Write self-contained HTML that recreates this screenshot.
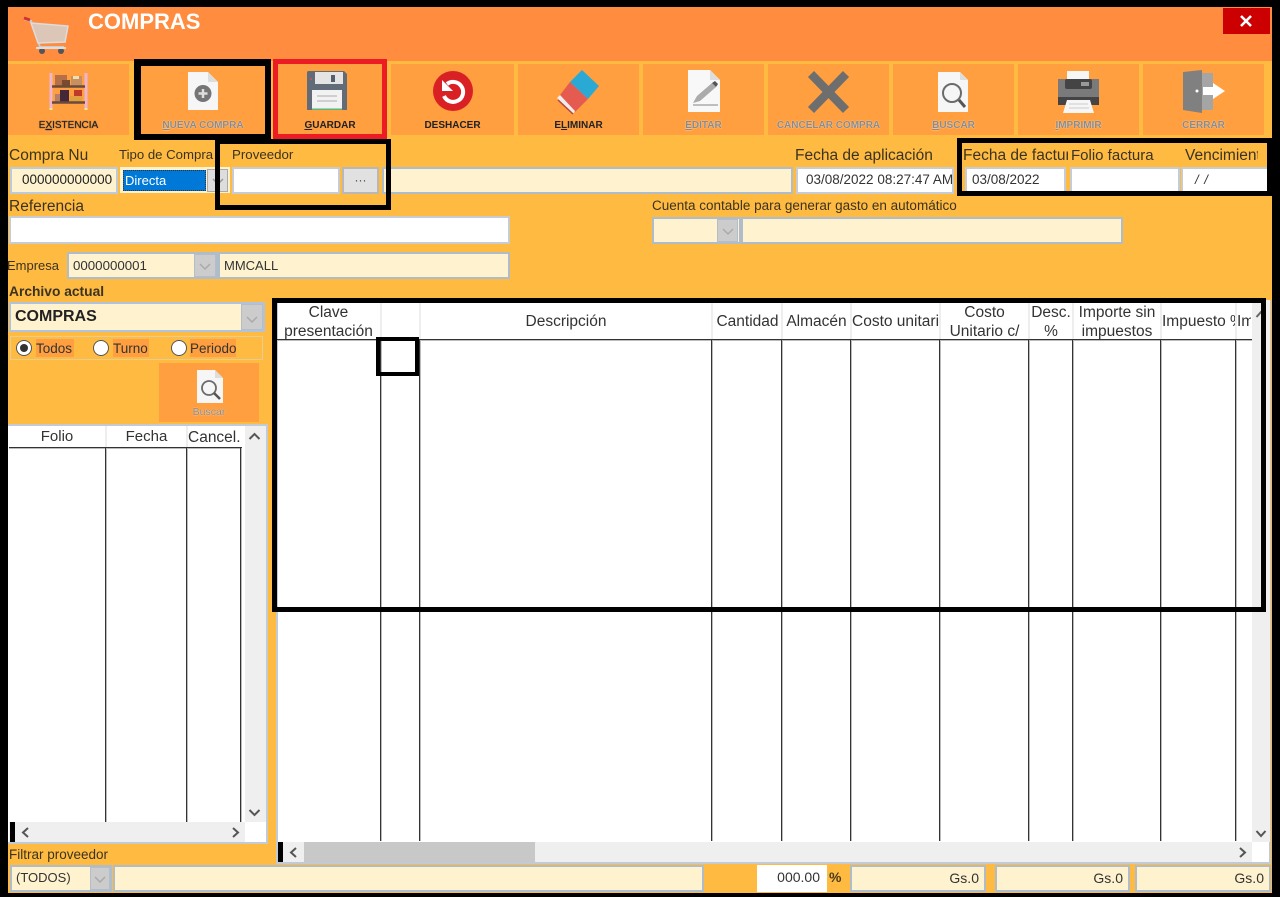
<!DOCTYPE html>
<html><head><meta charset="utf-8"><style>
html,body{margin:0;padding:0;background:#000}
body{width:1280px;height:897px;position:relative;overflow:hidden;font-family:"Liberation Sans",sans-serif;color:#222;font-size:14px}
div{position:absolute;box-sizing:border-box}
svg{position:absolute;overflow:visible}
.t{white-space:nowrap;line-height:16px;color:#3a3320}
.btn{background:#FF9F3F;top:64px;height:71px}
.lb{position:absolute;left:0;right:0;top:56px;text-align:center;font:bold 10px/12px "Liberation Sans",sans-serif;color:#222;white-space:nowrap}
.g{color:#8a8a8a;text-shadow:0 0 1px #fff}
.f{background:#FFF2CF;border:2px solid #AFBDCB;line-height:22px;white-space:nowrap;overflow:hidden;color:#333}
.w{background:#fff;border:2px solid #C6CCD2;line-height:22px;white-space:nowrap;overflow:hidden;color:#333}
.dd{background:#CCCCCC;border:1px solid #B5BEC8}
.bk{border:5px solid #000}
.vl{width:1px;background:#333;box-shadow:1px 0 0 #bbb;top:340px;height:501px}
.vh{width:2px;background:#EEE;top:302px;height:37px}
.vs{width:1px;background:#333;box-shadow:1px 0 0 #bbb;top:448px;height:374px}
.h{font-size:15.5px;line-height:19px;text-align:center;color:#333;white-space:nowrap;overflow:hidden}
</style></head><body>
<div style="left:8px;top:7px;width:1264px;height:886px;background:#FFBA42"></div>
<div style="left:8px;top:7px;width:1264px;height:54px;background:#FF8C3F"></div>
<div style="left:8px;top:61px;width:1264px;height:3px;background:#FFBA42"></div>
<div style="left:88px;top:9px;font:bold 22px/26px 'Liberation Sans',sans-serif;color:#fff;white-space:nowrap">COMPRAS</div>
<div style="left:1223px;top:8px;width:47px;height:26px;background:#CC0000"></div>
<svg style="left:1239px;top:15px" width="14" height="12"><path d="M2 1L12 11M12 1L2 11" stroke="#fff" stroke-width="2.600"/></svg>
<!-- cart -->
<svg style="left:22px;top:15px" width="50" height="42"><path d="M2 4L9 6L18 32H42" fill="none" stroke="#ccc" stroke-width="2"/><path d="M2 3l6 2" stroke="#c33" stroke-width="3"/><path d="M9 8L46 11L43 27L16 28Z" fill="#DCC6B8" stroke="#ddd" stroke-width="1.500"/><circle cx="20" cy="36" r="3" fill="#555"/><circle cx="39" cy="36" r="3" fill="#555"/><path d="M14 33H44" stroke="#ddd" stroke-width="2"/></svg>

<!-- toolbar -->
<div class="btn" style="left:8px;width:121px"><div class="lb" style="font-weight:normal;text-shadow:0 0 1px #333">E<u>X</u>ISTENCIA</div></div>
<div class="btn" style="left:141px;width:124px"><div class="lb g"><u>N</u>UEVA COMPRA</div></div>
<div class="btn" style="left:278px;width:104px"><div class="lb"><u>G</u>UARDAR</div></div>
<div class="btn" style="left:391px;width:123px"><div class="lb">DESHACER</div></div>
<div class="btn" style="left:518px;width:121px"><div class="lb">E<u>L</u>IMINAR</div></div>
<div class="btn" style="left:643px;width:121px"><div class="lb g"><u>E</u>DITAR</div></div>
<div class="btn" style="left:768px;width:121px"><div class="lb g">CANCELAR COMPRA</div></div>
<div class="btn" style="left:893px;width:121px"><div class="lb g"><u>B</u>USCAR</div></div>
<div class="btn" style="left:1018px;width:121px"><div class="lb g"><u>I</u>MPRIMIR</div></div>
<div class="btn" style="left:1143px;width:121px"><div class="lb g">CERRAR</div></div>

<!-- shelf -->
<svg style="left:49px;top:72px" width="40" height="40"><path d="M2 1V38M37 1V38" stroke="#EFB5D0" stroke-width="3"/><rect x="6" y="3" width="12" height="11" fill="#B5704A"/><rect x="13" y="8" width="8" height="6" fill="#7A4A2E"/><rect x="22" y="4" width="11" height="10" fill="#C89060"/><rect x="24" y="4" width="6" height="3" fill="#F0DDB0"/><rect x="6" y="22" width="5" height="8" fill="#B5806A"/><rect x="11" y="18" width="9" height="12" fill="#43283A"/><rect x="21" y="24" width="12" height="6" fill="#E0A040"/><rect x="25" y="18" width="8" height="6" fill="#C03A2A"/><path d="M3 14.500H36M3 30.500H36" stroke="#6A4A3A" stroke-width="2.500"/><path d="M2 36v2M37 36v2" stroke="#EEE8A0" stroke-width="3"/></svg>
<!-- doc plus -->
<svg style="left:187px;top:71px" width="32" height="40"><path d="M1 1H21L31 11V39H1Z" fill="#F6F6F6"/><path d="M21 1L31 11H21Z" fill="#DDD"/><circle cx="16" cy="22.500" r="8.500" fill="#757575"/><path d="M16 18V27M11.500 22.500H20.500" stroke="#ddd" stroke-width="2.500"/></svg>
<!-- floppy -->
<svg style="left:306px;top:71px" width="42" height="40"><path d="M2 0H38L41 3V39H1V1Z" fill="#626B78"/><rect x="9" y="1" width="28" height="12" fill="#E4E4E4"/><rect x="25" y="4" width="4" height="7" fill="#555E6B"/><rect x="6" y="19" width="30" height="20" fill="#F2F2F2"/><path d="M11 25H31M11 30H31" stroke="#CFCFCF" stroke-width="2"/><rect x="6" y="37.500" width="30" height="1.500" fill="#5DB77A"/><circle cx="5" cy="8" r="1" fill="#c55"/></svg>
<!-- undo -->
<svg style="left:432px;top:71px" width="42" height="42"><circle cx="21" cy="20" r="20" fill="#D92025"/><path d="M15 13A10 10 0 1 1 12 25" fill="none" stroke="#fff" stroke-width="4"/><path d="M10 9V20H21Z" fill="#fff"/></svg>
<!-- eraser -->
<svg style="left:556px;top:69px" width="46" height="46"><path d="M14 13L32 30L19 43L4 26Z" fill="#E55B50"/><path d="M14 13L26 1L43 17L32 30Z" fill="#2AA9D5"/><path d="M4 26L19 42L17 45L1 29Z" fill="#EDEDED"/><path d="M2 31L17 45" stroke="#B8433A" stroke-width="1.500"/></svg>
<!-- edit -->
<svg style="left:688px;top:70px" width="32" height="43"><path d="M0 0H22L32 10V42H0Z" fill="#F8F8F8"/><path d="M22 0L32 10H22Z" fill="#DDD"/><path d="M5 33L9 26L24 13L28 17L12 31Z" fill="#ABABAB"/><path d="M24 13L28 17L30 14L27 11Z" fill="#555"/><path d="M5 35H30" stroke="#AAA" stroke-width="1.500"/></svg>
<!-- X -->
<svg style="left:808px;top:72px" width="40" height="40"><path d="M3 2L38 38M38 2L3 38" stroke="#6E6E6E" stroke-width="8.500"/></svg>
<!-- search -->
<svg style="left:937px;top:71px" width="32" height="42"><path d="M1 1H23L31 9V41H1Z" fill="#F6F6F6"/><path d="M23 1L31 9H23Z" fill="#DDD"/><circle cx="15" cy="22" r="9" fill="none" stroke="#6B6B6B" stroke-width="2"/><path d="M22 29L28 36" stroke="#555" stroke-width="3"/></svg>
<!-- printer -->
<svg style="left:1057px;top:71px" width="43" height="42"><path d="M10 0H32V10H10Z" fill="#F6F6F6"/><path d="M1 8H42V33H1Z" fill="#7A7A7A"/><rect x="8" y="8" width="27" height="10" rx="2" fill="#444"/><rect x="24" y="11" width="8" height="4" fill="#999"/><path d="M1 26H42V34H1Z" fill="#444"/><path d="M10 29H33L37 42H6Z" fill="#F6F6F6"/><path d="M12 33H31M12 37H32" stroke="#CCC"/></svg>
<!-- door -->
<svg style="left:1182px;top:69px" width="44" height="44"><rect x="14" y="4" width="17" height="37" fill="#A5A5A5"/><path d="M1 3L20 1V44L1 41Z" fill="#808080"/><circle cx="15" cy="22" r="1.500" fill="#fff"/><path d="M21 18H31V14L43 22L31 30V26H21Z" fill="#fff"/></svg>

<!-- form -->
<div class="t" style="left:9px;top:148px;font-size:15.500px;color:#3d3418">Compra Nu</div>
<div class="t" style="left:119px;top:147px;font-size:13.200px">Tipo de Compra</div>
<div class="t" style="left:232px;top:147px;font-size:13.300px">Proveedor</div>
<div class="t" style="left:795px;top:148px;font-size:15.500px">Fecha de aplicación</div>
<div class="t" style="left:963px;top:148px;font-size:15.500px;width:105px;overflow:hidden">Fecha de factura</div>
<div class="t" style="left:1071px;top:148px;font-size:15px">Folio factura</div>
<div class="t" style="left:1185px;top:148px;font-size:15.500px;width:73px;overflow:hidden">Vencimiento</div>

<div class="f" style="left:10px;top:167px;width:108px;height:27px;padding-left:10px;font-size:13.500px;border-color:#BCCBDA;color:#222">000000000000</div>
<div style="left:120px;top:167px;width:110px;height:26px;background:#FFF2CF"></div>
<div style="left:123px;top:170px;width:83px;height:21px;background:#0078D7;border:1px dotted #333;color:#fff;font-size:13px;line-height:19px;padding-left:1px">Directa</div>
<div class="dd" style="left:207px;top:169px;width:21px;height:23px;background:#DDD;border-color:#AAA"></div>
<svg style="left:212px;top:178px" width="12" height="7"><path d="M1 1L6 6L11 1" fill="none" stroke="#999" stroke-width="1.500"/></svg>
<div class="w" style="left:232px;top:167px;width:108px;height:27px"></div>
<div style="left:342px;top:167px;width:37px;height:27px;background:#E1E1E1;border:2px solid #B8B8B8;text-align:center;font-size:12px;line-height:23px;color:#444">···</div>
<div class="f" style="left:382px;top:167px;width:411px;height:27px"></div>
<div class="w" style="left:796px;top:167px;width:158px;height:27px;font-size:13.500px;padding-left:8px;color:#333">03/08/2022 08:27:47 AM</div>
<div class="w" style="left:965px;top:167px;width:101px;height:26px;font-size:13.500px;padding-left:5px">03/08/2022</div>
<div class="w" style="left:1070px;top:167px;width:110px;height:26px"></div>
<div class="w" style="left:1181px;top:167px;width:88px;height:26px;font-size:13px;padding-left:12px;font-style:italic;word-spacing:2px">/ /</div>

<div class="t" style="left:9px;top:199px;font-size:15.500px">Referencia</div>
<div class="w" style="left:9px;top:216px;width:501px;height:28px"></div>
<div class="t" style="left:652px;top:198px;font-size:13.500px">Cuenta contable para generar gasto en automático</div>
<div class="f" style="left:652px;top:217px;width:89px;height:27px"></div>
<div class="dd" style="left:717px;top:219px;width:21px;height:23px"></div>
<svg style="left:722px;top:228px" width="12" height="7"><path d="M1 1L6 6L11 1" fill="none" stroke="#aaa" stroke-width="1.500"/></svg>
<div class="f" style="left:741px;top:217px;width:382px;height:27px"></div>

<div class="t" style="left:7px;top:258px;font-size:13px">Empresa</div>
<div class="f" style="left:67px;top:252px;width:151px;height:27px;font-size:13.300px;padding-left:4px;line-height:24px">0000000001</div>
<div class="dd" style="left:194px;top:254px;width:22px;height:23px"></div>
<svg style="left:199px;top:263px" width="12" height="7"><path d="M1 1L6 6L11 1" fill="none" stroke="#aaa" stroke-width="1.500"/></svg>
<div class="f" style="left:218px;top:252px;width:292px;height:27px;font-size:13px;padding-left:4px;line-height:24px">MMCALL</div>

<div class="t" style="left:9px;top:284px;font-size:13.800px;font-weight:bold">Archivo actual</div>
<div class="f" style="left:9px;top:302px;width:256px;height:30px;font-size:16px;font-weight:bold;padding-left:4px;line-height:26px;border-color:#AFC3DC;color:#222">COMPRAS</div>
<div class="dd" style="left:241px;top:304px;width:22px;height:26px"></div>
<svg style="left:246px;top:316px" width="12" height="7"><path d="M1 1L6 6L11 1" fill="none" stroke="#aaa" stroke-width="1.500"/></svg>

<div style="left:10px;top:336px;width:253px;height:24px;border:1px solid #E5CE8E"></div>
<div style="left:36px;top:339px;width:38px;height:18px;background:#FF9F3F;font-size:13.500px;line-height:20px;color:#333;white-space:nowrap">Todos</div>
<div style="left:113px;top:339px;width:36px;height:18px;background:#FF9F3F;font-size:13.500px;line-height:20px;color:#333;white-space:nowrap">Turno</div>
<div style="left:190px;top:339px;width:46px;height:18px;background:#FF9F3F;font-size:13.500px;line-height:20px;color:#333;white-space:nowrap">Periodo</div>
<svg style="left:16px;top:339px" width="170" height="18"><circle cx="8" cy="9" r="7.500" fill="#fff" stroke="#555"/><circle cx="8" cy="9" r="4" fill="#333"/><circle cx="85" cy="9" r="7.500" fill="#fff" stroke="#555"/><circle cx="163" cy="9" r="7.500" fill="#fff" stroke="#555"/></svg>

<div style="left:159px;top:363px;width:100px;height:59px;background:#FF9F3F"></div>
<svg style="left:197px;top:370px" width="26" height="34"><path d="M0 0H18L26 8V33H0Z" fill="#F6F6F6"/><path d="M18 0L26 8H18Z" fill="#DDD"/><circle cx="12" cy="18" r="7" fill="none" stroke="#6B6B6B" stroke-width="1.800"/><path d="M17 23L23 29" stroke="#555" stroke-width="2.500"/></svg>
<div style="left:159px;top:406px;width:100px;text-align:center;font-size:10.500px;line-height:13px;color:#8a8a8a;text-shadow:0 0 1px #fff">Buscar</div>

<!-- left list -->
<div style="left:8px;top:424px;width:260px;height:420px;background:#fff;border:2px solid #C2CBD5;border-left:0"></div>
<div style="left:245px;top:426px;width:21px;height:396px;background:#EFEFEF"></div>
<svg style="left:248px;top:432px" width="13" height="9"><path d="M1.500 7L6.500 2L11.500 7" fill="none" stroke="#555" stroke-width="2"/></svg>
<svg style="left:248px;top:808px" width="13" height="9"><path d="M1.500 2L6.500 7L11.500 2" fill="none" stroke="#555" stroke-width="2"/></svg>
<div style="left:9px;top:447px;width:233px;height:1px;background:#333;box-shadow:0 1px 0 #bbb"></div>
<div class="h" style="left:9px;top:427px;width:96px;font-size:15px">Folio</div>
<div class="h" style="left:107px;top:427px;width:79px;font-size:15px">Fecha</div>
<div class="h" style="left:188px;top:428px;width:52px;overflow:visible;text-align:left">Cancel.</div>
<div style="left:105px;top:426px;width:2px;height:21px;background:#EEE"></div>
<div style="left:186px;top:426px;width:2px;height:21px;background:#EEE"></div>
<div class="vs" style="left:105px"></div><div class="vs" style="left:186px"></div><div class="vs" style="left:240px"></div>
<div style="left:9px;top:822px;width:236px;height:20px;background:#EFEFEF"></div>
<div style="left:10px;top:822px;width:5px;height:20px;background:#000"></div>
<svg style="left:21px;top:827px" width="9" height="11"><path d="M7 1L2 5.500L7 10" fill="none" stroke="#555" stroke-width="2"/></svg>
<svg style="left:231px;top:827px" width="9" height="11"><path d="M2 1L7 5.500L2 10" fill="none" stroke="#555" stroke-width="2"/></svg>

<div class="t" style="left:9px;top:847px;font-size:13.500px">Filtrar proveedor</div>

<!-- main grid -->
<div style="left:276px;top:300px;width:995px;height:564px;background:#fff;border:2px solid #C2CBD5;border-top:0"></div>
<div style="left:1252px;top:300px;width:18px;height:542px;background:#EFEFEF"></div>
<svg style="left:1255px;top:310px" width="12" height="9"><path d="M1.500 7L6 2L10.500 7" fill="none" stroke="#666" stroke-width="2"/></svg>
<svg style="left:1255px;top:829px" width="12" height="9"><path d="M1.500 2L6 7L10.500 2" fill="none" stroke="#555" stroke-width="2"/></svg>
<div style="left:277px;top:339px;width:975px;height:1px;background:#333;box-shadow:0 1px 0 #bbb"></div>
<div class="vh" style="left:380px"></div><div class="vh" style="left:419px"></div><div class="vh" style="left:711px"></div><div class="vh" style="left:781px"></div><div class="vh" style="left:850px"></div><div class="vh" style="left:939px"></div><div class="vh" style="left:1028px"></div><div class="vh" style="left:1072px"></div><div class="vh" style="left:1160px"></div><div class="vh" style="left:1235px"></div>
<div class="vl" style="left:380px"></div><div class="vl" style="left:419px"></div><div class="vl" style="left:711px"></div><div class="vl" style="left:781px"></div><div class="vl" style="left:850px"></div><div class="vl" style="left:939px"></div><div class="vl" style="left:1028px"></div><div class="vl" style="left:1072px"></div><div class="vl" style="left:1160px"></div><div class="vl" style="left:1235px"></div>

<div class="h" style="left:277px;top:303px;width:103px">Clave<br>presentación</div>
<div class="h" style="left:420px;top:312px;width:292px">Descripción</div>
<div class="h" style="left:714px;top:312px;width:67px;overflow:visible">Cantidad</div>
<div class="h" style="left:783px;top:312px;width:67px;overflow:visible">Almacén</div>
<div class="h" style="left:852px;top:312px;width:87px;text-align:left">Costo unitario</div>
<div class="h" style="left:941px;top:303px;width:87px">Costo<br>Unitario c/</div>
<div class="h" style="left:1030px;top:303px;width:42px;overflow:visible">Desc.<br>%</div>
<div class="h" style="left:1074px;top:303px;width:86px;overflow:visible">Importe sin<br>impuestos</div>
<div class="h" style="left:1162px;top:312px;width:73px;text-align:left">Impuesto %</div>
<div class="h" style="left:1237px;top:312px;width:14px;text-align:left">Impuesto</div>

<div style="left:278px;top:842px;width:974px;height:20px;background:#EFEFEF"></div>
<div style="left:278px;top:842px;width:5px;height:20px;background:#000"></div>
<div style="left:304px;top:842px;width:231px;height:20px;background:#C8C8C8"></div>
<svg style="left:289px;top:847px" width="9" height="11"><path d="M7 1L2 5.500L7 10" fill="none" stroke="#555" stroke-width="2"/></svg>
<svg style="left:1238px;top:847px" width="9" height="11"><path d="M2 1L7 5.500L2 10" fill="none" stroke="#555" stroke-width="2"/></svg>

<!-- bottom -->
<div class="f" style="left:10px;top:865px;width:102px;height:27px;padding-left:4px;font-size:13px;line-height:22px">(TODOS)</div>
<div class="dd" style="left:90px;top:867px;width:20px;height:23px"></div>
<svg style="left:94px;top:876px" width="12" height="7"><path d="M1 1L6 6L11 1" fill="none" stroke="#aaa" stroke-width="1.500"/></svg>
<div class="f" style="left:113px;top:865px;width:591px;height:27px"></div>
<div style="left:757px;top:865px;width:70px;height:27px;background:#fff;text-align:right;padding-right:7px;font-size:14px;line-height:25px;color:#333">000.00</div>
<div style="left:829px;top:868px;font-size:14px;font-weight:bold;line-height:18px;color:#4a3a18">%</div>
<div class="f" style="left:850px;top:865px;width:136px;height:27px;text-align:right;padding-right:5px;font-size:14px;line-height:22px">Gs.0</div>
<div class="f" style="left:995px;top:865px;width:135px;height:27px;text-align:right;padding-right:5px;font-size:14px;line-height:22px">Gs.0</div>
<div class="f" style="left:1135px;top:865px;width:136px;height:27px;text-align:right;padding-right:5px;font-size:14px;line-height:22px">Gs.0</div>

<!-- annotation rectangles -->
<div class="bk" style="left:134px;top:59px;width:137px;height:81px;border-width:7px 6px 6px 7px"></div>
<div class="bk" style="left:273px;top:59px;width:114px;height:80px;border-color:#ED1C24"></div>
<div class="bk" style="left:215px;top:139px;width:176px;height:71px"></div>
<div class="bk" style="left:957px;top:138px;width:315px;height:58px"></div>
<div class="bk" style="left:272px;top:298px;width:994px;height:314px"></div>
<div class="bk" style="left:376px;top:337px;width:43px;height:39px;border-width:4px"></div>
<div style="left:1272px;top:0;width:8px;height:897px;background:#000"></div>
<div style="left:0;top:893px;width:1280px;height:4px;background:#000"></div>
</body></html>
